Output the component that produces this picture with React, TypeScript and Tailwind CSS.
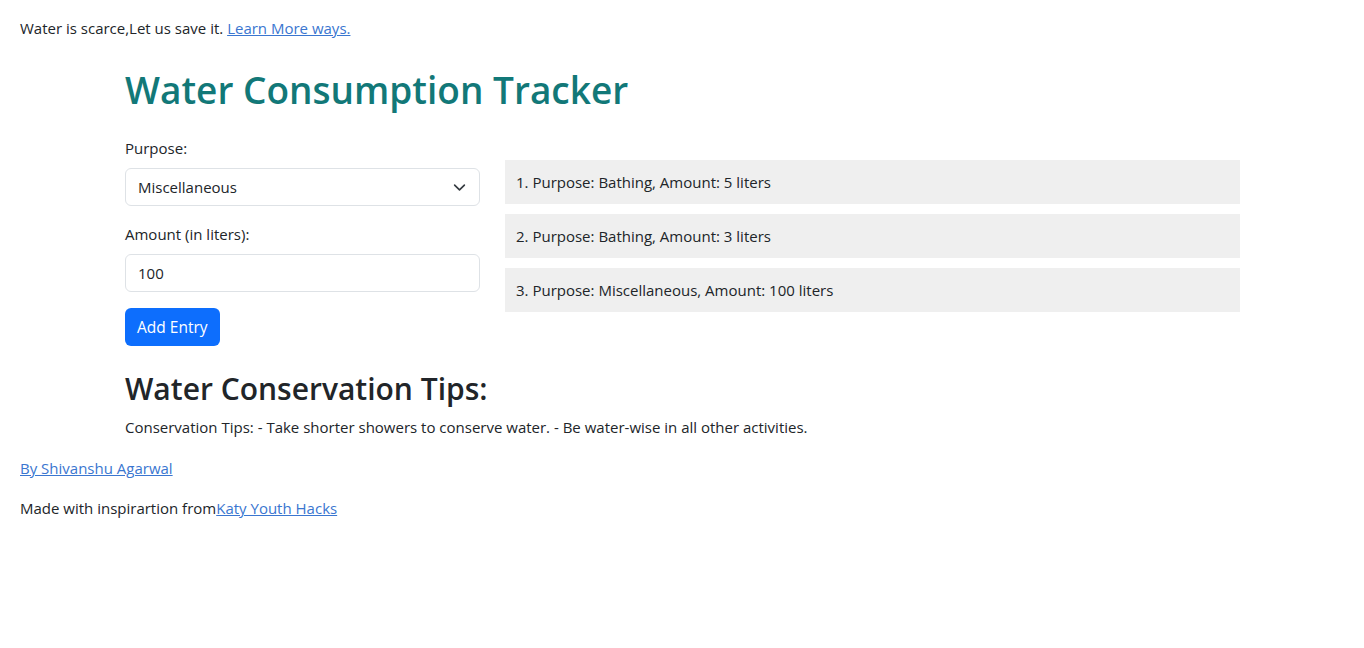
import { FC, useState } from 'react'

type Entry = { purpose: string; amount: number }

const App: FC = () => {
    const [purpose, setPurpose] = useState('Miscellaneous');
    const [amount, setAmount] = useState('100');
    const [entries, setEntries] = useState<Entry[]>([
        { purpose: 'Bathing', amount: 5 },
        { purpose: 'Bathing', amount: 3 },
        { purpose: 'Miscellaneous', amount: 100 },
    ]);

    const addEntry = () => {
        const n = parseFloat(amount);
        if (!isNaN(n)) setEntries([...entries, { purpose, amount: n }]);
    };

    return (
        <div className="min-h-screen bg-white text-[15px] leading-6 text-[#212529] font-['Open_Sans',sans-serif]">
            {/* Top banner */}
            <p className="px-5 pt-4">
                Water is scarce,Let us save it.{' '}
                <a href="#" className="text-[#3a76d0] underline">Learn More ways.</a>
            </p>

            <div className="mx-auto mt-[26px] w-[1140px] pl-[13px] pr-3">
                <h1 className="text-[37px] leading-[48px] font-semibold text-[#127878] mb-[22px]">
                    Water Consumption Tracker
                </h1>

                <div className="flex gap-[25px]">
                    {/* Form */}
                    <div className="w-[355px]">
                        <label className="block mb-2">Purpose:</label>
                        <div className="relative mb-4">
                            <select
                                value={purpose}
                                onChange={(e) => setPurpose(e.target.value)}
                                className="block w-full h-[38px] appearance-none rounded-md border border-[#dee2e6] bg-white pl-3 pr-9 text-[15px]"
                            >
                                <option>Bathing</option>
                                <option>Cooking</option>
                                <option>Drinking</option>
                                <option>Miscellaneous</option>
                            </select>
                            <svg className="pointer-events-none absolute right-[14px] top-[13px] w-[13px] h-[13px]" viewBox="0 0 16 16" fill="none" stroke="#343a40" strokeWidth="2" strokeLinecap="round" strokeLinejoin="round">
                                <path d="m2 5 6 6 6-6" />
                            </svg>
                        </div>

                        <label className="block mb-2">Amount (in liters):</label>
                        <input
                            type="number"
                            value={amount}
                            onChange={(e) => setAmount(e.target.value)}
                            className="block w-full h-[38px] rounded-md border border-[#dee2e6] bg-white px-3 mb-4 text-[15px] [appearance:textfield]"
                        />

                        <button
                            onClick={addEntry}
                            className="h-[38px] px-3 rounded-md bg-[#0d6efd] text-white text-[15.5px]"
                        >
                            Add Entry
                        </button>
                    </div>

                    {/* Entries */}
                    <ul className="flex-1 pt-6 flex flex-col gap-[10px]">
                        {entries.map((e, i) => (
                            <li key={i} className="bg-[#efefef] px-[11px] py-[10px]">
                                {i + 1}. Purpose: {e.purpose}, Amount: {e.amount} liters
                            </li>
                        ))}
                    </ul>
                </div>

                <h2 className="mt-6 text-[30px] leading-[38px] font-semibold mb-[7px]">
                    Water Conservation Tips:
                </h2>
                <p>
                    Conservation Tips: - Take shorter showers to conserve water. - Be water-wise in all other activities.
                </p>
            </div>

            <p className="px-5 mt-[17px]">
                <a href="#" className="text-[#3a76d0] underline">By Shivanshu Agarwal</a>
            </p>
            <p className="px-5 mt-4">
                Made with inspirartion from<a href="#" className="text-[#3a76d0] underline">Katy Youth Hacks</a>
            </p>
        </div>
    );
};

export default App;
